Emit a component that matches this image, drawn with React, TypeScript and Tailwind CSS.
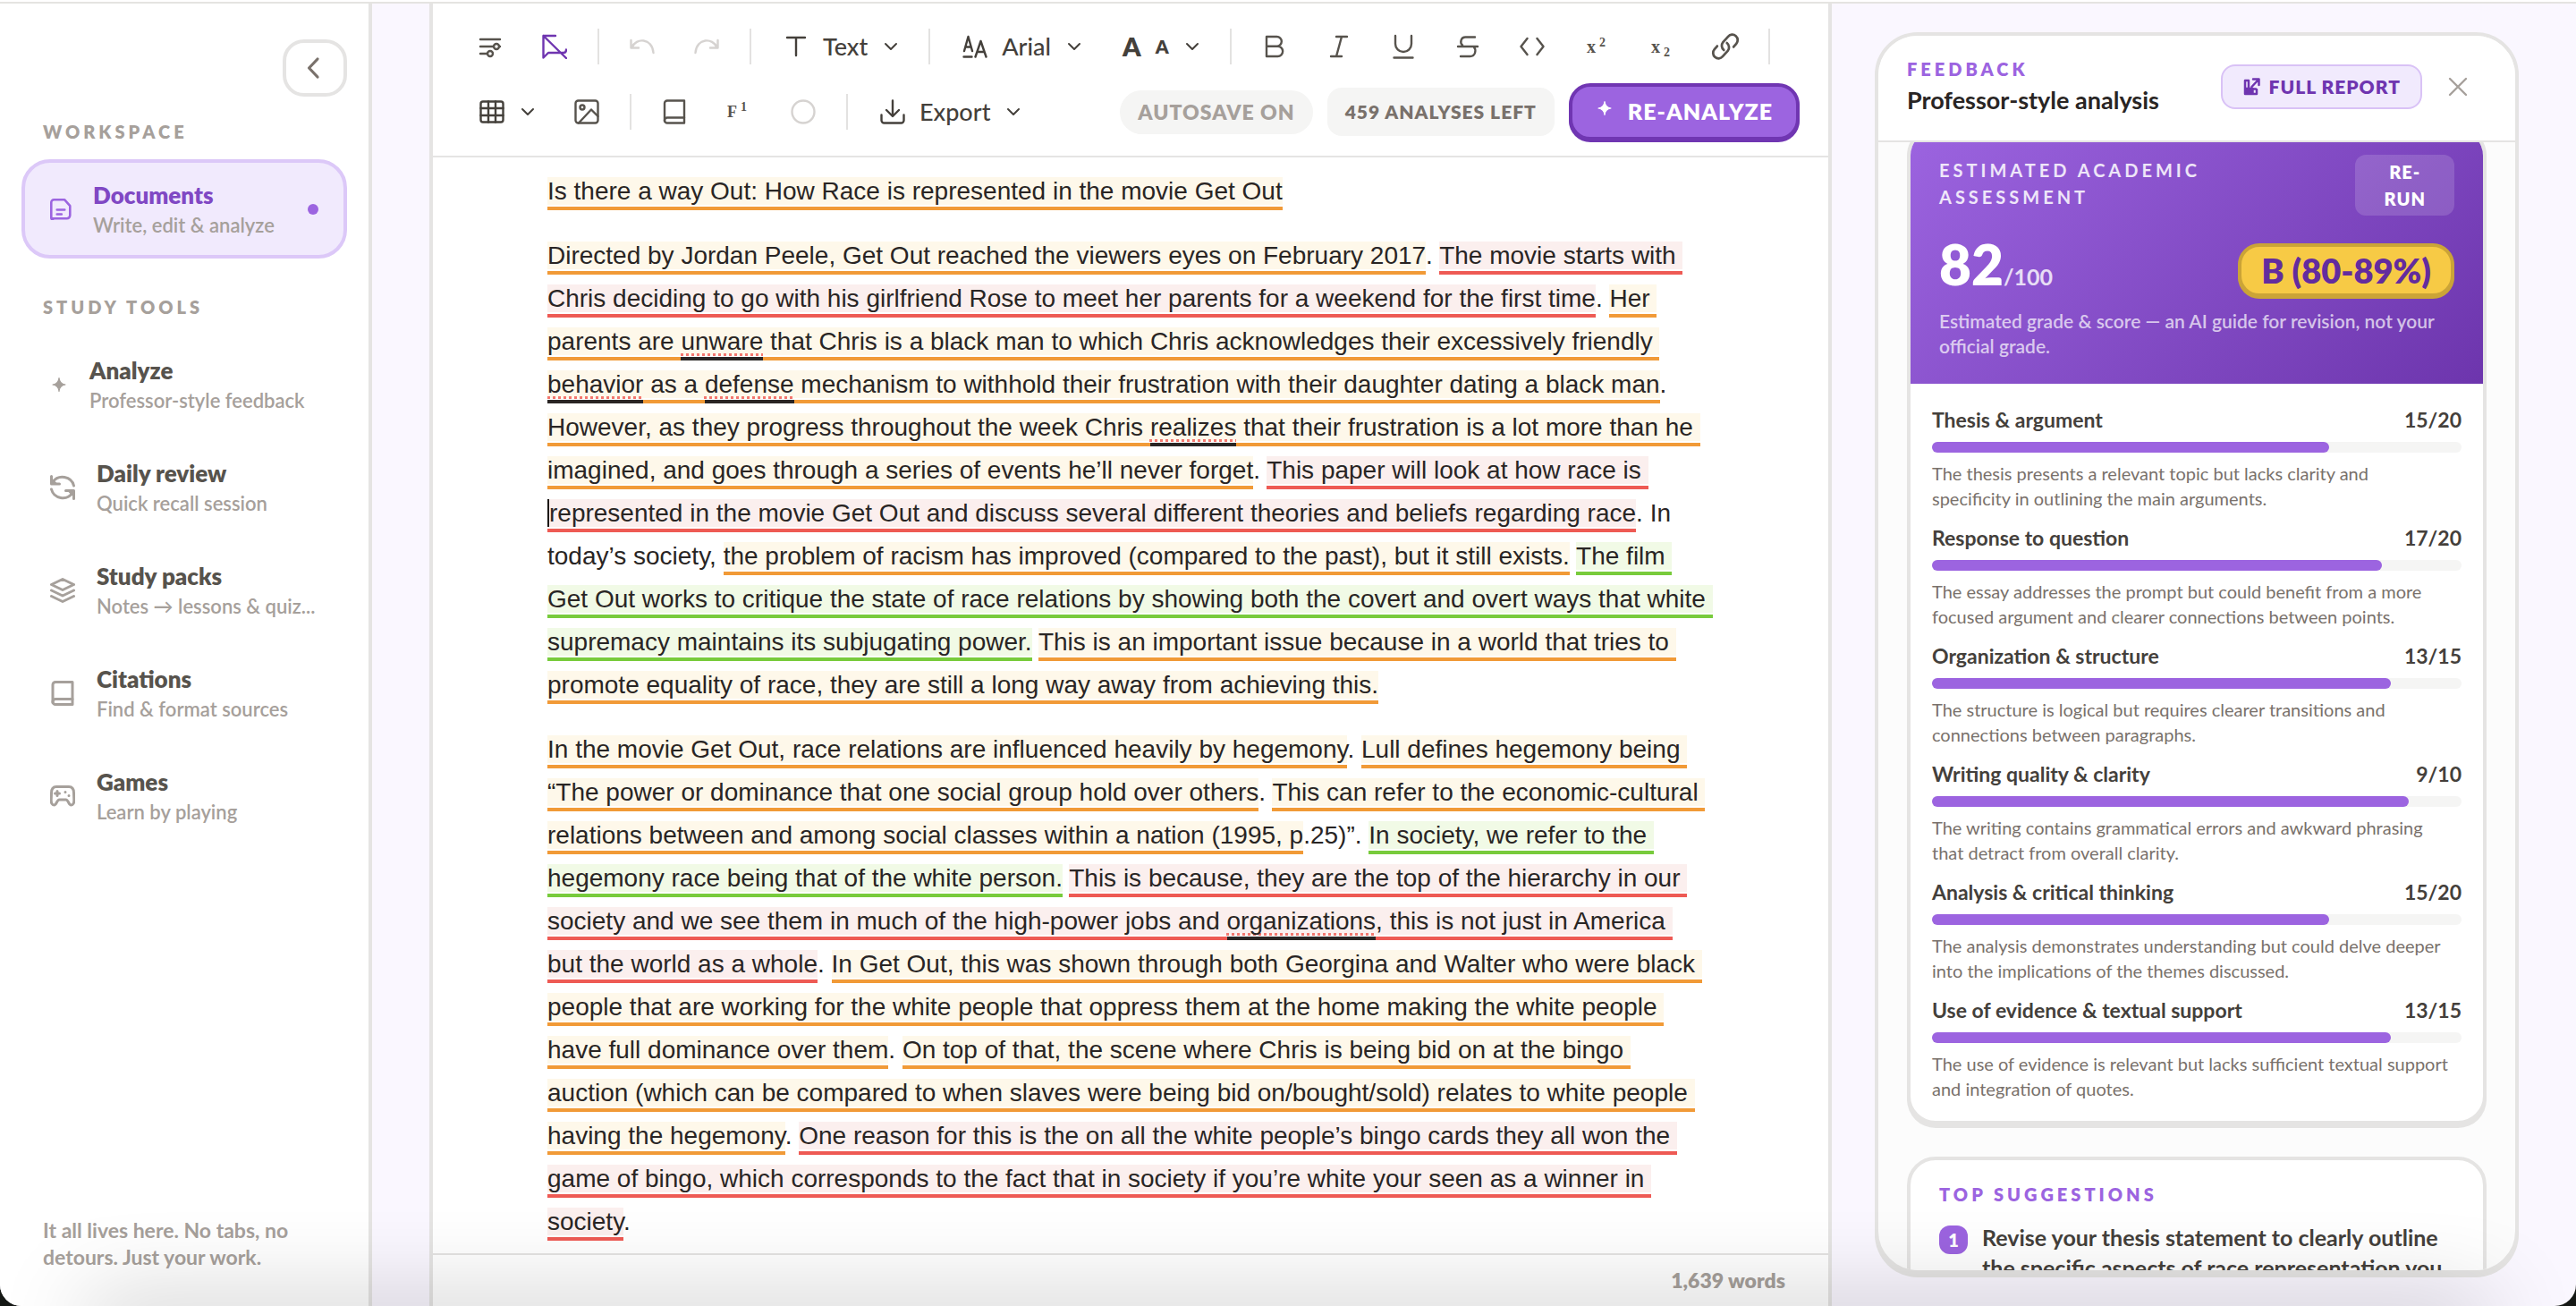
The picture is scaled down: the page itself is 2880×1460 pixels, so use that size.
import React from 'react';
import clsx from 'clsx';

type Tone = 'amber' | 'red' | 'green' | null;
type Segment = [Tone, string];

interface IconProps {
  className?: string;
  children: React.ReactNode;
}

// 28px outline icon, inherits the text colour
const Icon: React.FC<IconProps> = ({ className = 'size-7', children }) => (
  <svg
    viewBox="0 0 28 28"
    className={clsx('shrink-0', className)}
    fill="none"
    stroke="currentColor"
    strokeWidth="2.4"
    strokeLinecap="round"
    strokeLinejoin="round"
    aria-hidden="true"
  >
    {children}
  </svg>
);

const Chevron = () => (
  <svg viewBox="0 0 20 20" className="size-5 shrink-0" fill="none" stroke="currentColor" strokeWidth="2" strokeLinecap="round" strokeLinejoin="round" aria-hidden="true">
    <path d="M4 7l6 6 6-6" />
  </svg>
);

const Sparkle: React.FC<{ className?: string }> = ({ className }) => (
  <svg viewBox="0 0 20 20" className={clsx('size-5 shrink-0', className)} fill="currentColor" aria-hidden="true">
    <path d="M10 2.5Q10.500 9 17 10 10.500 11 10 17.500 9.500 11 3 10 9.500 9 10 2.500z" stroke="currentColor" strokeWidth="1.200" strokeLinejoin="round" />
  </svg>
);

const BookIcon = () => (
  <Icon>
    <path d="M25 20.500V1.500H6a3 3 0 0 0-3 3v20" />
    <path d="M25 20.500H6a3 3 0 0 0 0 6h19z" />
  </Icon>
);

const studyTools = [
  { label: 'Analyze', hint: 'Professor-style feedback', icon: <Sparkle className="text-stone-400" /> },
  {
    label: 'Daily review',
    hint: 'Quick recall session',
    icon: (
      <Icon>
        <path d="M26.500 12A13 12.500 0 0 0 3 8M1.500 1.500v8.500h9M1.500 16a13 12.500 0 0 0 23.500 4M26.500 26.500v-9h-9" />
        <path d="M2 3.500L8.500 10H2zM26 24.500L19.500 18H26z" fill="currentColor" stroke="none" />
      </Icon>
    ),
  },
  {
    label: 'Study packs',
    hint: 'Notes → lessons & quiz...',
    icon: (
      <Icon>
        <path d="M14 1.500L26.500 7.500 14 13.500 1.500 7.500zM1.500 14l12.500 6 12.500-6M1.500 20.500l12.500 6 12.500-6" />
      </Icon>
    ),
  },
  { label: 'Citations', hint: 'Find & format sources', icon: <BookIcon /> },
  {
    label: 'Games',
    hint: 'Learn by playing',
    icon: (
      <Icon>
        <path d="M7 3.500h14c4 0 5.500 2.500 5.500 7l.3 8c.1 3-1 5.500-3.200 5.500-3 0-3-6-6-6h-7.200c-3 0-3 6-6 6-2.200 0-3.300-2.500-3.200-5.500l.3-8C1.500 6 3 3.500 7 3.500z" />
        <path d="M5.500 11h5M8 8.500v5" />
        <path d="M17 9.500h.01M21 13.500h.01" />
      </Icon>
    ),
  },
];

// *word* is a spelling mark, |word has the caret in front of it
const essay: Segment[][] = [
  [['amber', 'Is there a way Out: How Race is represented in the movie Get Out']],
  [
    ['amber', 'Directed by Jordan Peele, Get Out reached the viewers eyes on February 2017'],
    [null, '. '],
    ['red', 'The movie starts with Chris deciding to go with his girlfriend Rose to meet her parents for a weekend for the first time'],
    [null, '. '],
    ['amber', 'Her parents are *unware* that Chris is a black man to which Chris acknowledges their excessively friendly *behavior* as a *defense* mechanism to withhold their frustration with their daughter dating a black man'],
    [null, '. '],
    ['amber', 'However, as they progress throughout the week Chris *realizes* that their frustration is a lot more than he imagined, and goes through a series of events he’ll never forget'],
    [null, '. '],
    ['red', 'This paper will look at how race is |represented in the movie Get Out and discuss several different theories and beliefs regarding race'],
    [null, '. In today’s society, '],
    ['amber', 'the problem of racism has improved (compared to the past), but it still exists.'],
    [null, ' '],
    ['green', 'The film Get Out works to critique the state of race relations by showing both the covert and overt ways that white supremacy maintains its subjugating power.'],
    [null, ' '],
    ['amber', 'This is an important issue because in a world that tries to promote equality of race, they are still a long way away from achieving this.'],
  ],
  [
    ['amber', 'In the movie Get Out, race relations are influenced heavily by hegemony'],
    [null, '. '],
    ['amber', 'Lull defines hegemony being “The power or dominance that one social group hold over others'],
    [null, '. '],
    ['amber', 'This can refer to the economic-cultural relations between and among social classes within a nation (1995, p'],
    [null, '.25)”. '],
    ['green', 'In society, we refer to the hegemony race being that of the white person.'],
    [null, ' '],
    ['red', 'This is because, they are the top of the hierarchy in our society and we see them in much of the high-power jobs and *organizations*, this is not just in America but the world as a whole'],
    [null, '. '],
    ['amber', 'In Get Out, this was shown through both Georgina and Walter who were black people that are working for the white people that oppress them at the home making the white people have full dominance over them'],
    [null, '. '],
    ['amber', 'On top of that, the scene where Chris is being bid on at the bingo auction (which can be compared to when slaves were being bid on/bought/sold) relates to white people having the hegemony'],
    [null, '. '],
    ['red', 'One reason for this is the on all the white people’s bingo cards they all won the game of bingo, which corresponds to the fact that in society if you’re white your seen as a winner in society'],
    [null, '.'],
  ],
];

const criteria = [
  { name: 'Thesis & argument', score: 15, max: 20, note: 'The thesis presents a relevant topic but lacks clarity and\nspecificity in outlining the main arguments.' },
  { name: 'Response to question', score: 17, max: 20, note: 'The essay addresses the prompt but could benefit from a more\nfocused argument and clearer connections between points.' },
  { name: 'Organization & structure', score: 13, max: 15, note: 'The structure is logical but requires clearer transitions and\nconnections between paragraphs.' },
  { name: 'Writing quality & clarity', score: 9, max: 10, note: 'The writing contains grammatical errors and awkward phrasing\nthat detract from overall clarity.' },
  { name: 'Analysis & critical thinking', score: 15, max: 20, note: 'The analysis demonstrates understanding but could delve deeper\ninto the implications of the themes discussed.' },
  { name: 'Use of evidence & textual support', score: 13, max: 15, note: 'The use of evidence is relevant but lacks sufficient textual support\nand integration of quotes.' },
];

const toneClass = {
  amber: 'bg-[#fef8ea] border-[#f19a37]',
  red: 'bg-[#fbefee] border-[#ee5a54]',
  green: 'bg-[#f1fae6] border-[#78cb3c]',
};

const renderText = (text: string) =>
  text.split(/(\*[^*]+\*|\|\w+)/).map((part, i) => {
    if (part.startsWith('|')) {
      return (
        <span key={i} className="border-l-2 border-stone-900">
          {part.slice(1)}
        </span>
      );
    }
    if (part.startsWith('*')) {
      return (
        <span key={i} className="border-b-4 border-stone-800 pb-[2px] underline decoration-[#f3776f] decoration-dotted decoration-3 underline-offset-4 [text-decoration-skip-ink:none]">
          {part.slice(1, -1)}
        </span>
      );
    }
    return part;
  });

const NavItem: React.FC<{ label: string; hint: string; icon: React.ReactNode; active?: boolean }> = ({ label, hint, icon, active }) => (
  <a
    href="#"
    className={clsx(
      'flex items-center gap-6 rounded-[32px] border-4 px-7 py-[18px] [&>svg]:stroke-3',
      active ? 'border-[#dcc8f8] bg-[#f1eafd]' : 'border-transparent',
    )}
  >
    {icon}
    <span className="flex min-w-0 flex-1 flex-col">
      <span className={clsx('text-[26px] leading-[36px] font-extrabold', active ? 'text-[#8048c4]' : 'text-stone-600')}>{label}</span>
      <span className="truncate text-[22px] leading-[31px] font-semibold text-stone-400">{hint}</span>
    </span>
    {active && <span className="size-3 shrink-0 rounded-full bg-[#9c64e0]" />}
  </a>
);

const Sidebar = () => (
  <aside className="flex w-[416px] shrink-0 flex-col border-r-4 border-[#e5e4e3] bg-white pt-10 pr-6 pb-10 pl-6">
    <button aria-label="Collapse sidebar" className="flex h-16 w-[72px] items-center justify-center self-end rounded-[24px] border-4 border-[#e5e4e3] text-stone-500">
      <Icon>
        <path d="M17 4L7.500 14l9.500 10" strokeWidth="3.200" />
      </Icon>
    </button>
    <h2 className="mt-6 mb-4 pl-6 text-[20px] leading-[30px] font-extrabold tracking-[4px] text-stone-400">WORKSPACE</h2>
    <NavItem
      active
      label="Documents"
      hint="Write, edit & analyze"
      icon={
        <Icon className="size-6 text-[#9c64e0]">
          <path d="M3.500 27.500v-1.500H22a4 4 0 0 0 4-4V9.500L19 1.500H5A3.500 3.500 0 0 0 1.500 5v20a2.500 2.500 0 0 0 2 2.500M9 14.500h10M9 20.500h6" />
        </Icon>
      }
    />
    <h2 className="mt-[39px] mb-4 pl-6 text-[20px] leading-[30px] font-extrabold tracking-[4px] text-stone-400">STUDY TOOLS</h2>
    <nav className="flex flex-col gap-1 text-stone-400">
      {studyTools.map((tool) => (
        <NavItem key={tool.label} {...tool} />
      ))}
    </nav>
    <p className="mt-auto pr-4 pl-6 text-[23px] leading-[30px] font-bold text-stone-400">
      It all lives here. No tabs, no
      <br />
      detours. Just your work.
    </p>
  </aside>
);

const ToolButton: React.FC<{ label: string; className?: string; children: React.ReactNode }> = ({ label, className, children }) => (
  <button aria-label={label} className={clsx('flex h-16 w-[72px] items-center justify-center', className)}>
    {children}
  </button>
);

const MenuButton: React.FC<{ label: string; children: React.ReactNode }> = ({ label, children }) => (
  <button aria-label={label} className="flex h-16 items-center gap-4 pr-5 pl-6 text-[27px] font-medium text-stone-700">
    {children}
    <Chevron />
  </button>
);

const Divider = () => <span className="mx-3 h-10 w-[2px] bg-[#e3e2e1]" />;

const Toolbar = () => (
  <div className="flex flex-col gap-[9px] border-b-2 border-[#e5e4e3] px-7 pt-4 pb-[17px] text-stone-600">
    <div className="flex h-16 items-center">
      <ToolButton label="Formatting options">
        <Icon>
          <path d="M3 6h22M3 14h15M24.500 14h.5M3 22h8" />
          <circle cx="21" cy="14" r="3" />
          <circle cx="14" cy="22" r="3" />
        </Icon>
      </ToolButton>
      <ToolButton label="Hide marks" className="text-[#6f35b0]">
        <Icon>
          <path d="M15 2H1.500v24.500L7 21h17c2 0 3-1 3-3.500M1.500 2L27 27" />
        </Icon>
      </ToolButton>
      <Divider />
      <ToolButton label="Undo" className="text-stone-300">
        <Icon>
          <path d="M1.500 7v8.500H10M2.500 15C7 4 25 4 26.500 21" />
        </Icon>
      </ToolButton>
      <ToolButton label="Redo" className="text-stone-300">
        <Icon>
          <path d="M26.500 7v8.500H18M25.500 15C21 4 3 4 1.500 21" />
        </Icon>
      </ToolButton>
      <Divider />
      <MenuButton label="Text style">
        <Icon>
          <path d="M4 4h20M14 4v20" />
        </Icon>
        Text
      </MenuButton>
      <Divider />
      <MenuButton label="Font family">
        <Icon>
          <path d="M2 19L6.500 3 11 19M3.500 14.500h6M1.500 25.500h9M14.500 25.500L20.500 8l6 17.500M16.500 20h8" />
        </Icon>
        Arial
      </MenuButton>
      <MenuButton label="Font size">
        <span className="text-[29px] font-extrabold">A</span>
        <span className="text-[21px] font-extrabold">A</span>
      </MenuButton>
      <Divider />
      <ToolButton label="Bold">
        <Icon>
          <path d="M5 3h11.500a5.300 5.300 0 0 1 0 10.700H5zM5 13.700h12.500a5.600 5.600 0 0 1 0 11.300H5z" />
        </Icon>
      </ToolButton>
      <ToolButton label="Italic">
        <Icon>
          <path d="M11 3h12M5 25h12M17 3l-6 22" />
        </Icon>
      </ToolButton>
      <ToolButton label="Underline">
        <Icon>
          <path d="M5 2v9a9 9 0 0 0 18 0V2M3.500 26.500h21" />
        </Icon>
      </ToolButton>
      <ToolButton label="Strikethrough">
        <Icon>
          <path d="M22 3.500H11.500C6 3.500 5 10 8 12.500M3 14h22M6 25h10.500c6 0 7.500-7 4-11" />
        </Icon>
      </ToolButton>
      <ToolButton label="Code">
        <Icon>
          <path d="M8.500 5L1.500 14l7 9M19.500 5l7 9-7 9" />
        </Icon>
      </ToolButton>
      <ToolButton label="Superscript">
        <span className="font-['Liberation_Serif',serif] text-[20px] font-bold">
          x<sup className="pl-1 text-[14px]">2</sup>
        </span>
      </ToolButton>
      <ToolButton label="Subscript">
        <span className="font-['Liberation_Serif',serif] text-[20px] font-bold">
          x<sub className="pl-1 text-[14px]">2</sub>
        </span>
      </ToolButton>
      <ToolButton label="Link">
        <Icon className="size-8">
          <path d="M12.500 17.500a5.500 5.500 0 0 1-.8-7.800l5-5.500a5.300 5.300 0 0 1 8 7l-2.700 3.200" />
          <path d="M15.500 10.500a5.500 5.500 0 0 1 .8 7.800l-5 5.500a5.300 5.300 0 0 1-8-7l2.700-3.200" />
        </Icon>
      </ToolButton>
      <Divider />
    </div>
    <div className="flex h-16 items-center">
      <MenuButton label="Table">
        <Icon>
          <rect x="1.500" y="2.500" width="25" height="23" rx="2.500" />
          <path d="M1.500 10h25M1.500 18h25M10 2.500v23M18 2.500v23" />
        </Icon>
      </MenuButton>
      <ToolButton label="Image">
        <Icon>
          <rect x="1.500" y="1.500" width="25" height="25" rx="3" />
          <circle cx="9" cy="9" r="2.500" />
          <path d="M5 26.500L19 11.500l7.500 7.500" />
        </Icon>
      </ToolButton>
      <Divider />
      <ToolButton label="Citations">
        <BookIcon />
      </ToolButton>
      <ToolButton label="Footnote">
        <span className="pr-1 font-['Liberation_Serif',serif] text-[18px] font-bold">
          F<sup className="pl-1 text-[14px]">1</sup>
        </span>
      </ToolButton>
      <ToolButton label="Status" className="text-stone-300">
        <Icon>
          <circle cx="14" cy="14" r="12.500" />
        </Icon>
      </ToolButton>
      <Divider />
      <MenuButton label="Export">
        <Icon>
          <path d="M14 1.500v17M7 12l7 7 7-7M1.500 17.500v6a3 3 0 0 0 3 3h19a3 3 0 0 0 3-3v-6" />
        </Icon>
        Export
      </MenuButton>
      <span className="ml-auto rounded-full bg-[#f5f5f4] px-5 py-2 text-[23px] leading-[33px] font-extrabold tracking-[1px] text-stone-400">AUTOSAVE ON</span>
      <span className="ml-4 rounded-2xl bg-[#f5f5f4] px-5 py-3 text-[21px] leading-[30px] font-extrabold tracking-[1px] text-stone-500">459 ANALYSES LEFT</span>
      <button className="ml-4 flex h-16 items-center gap-4 rounded-[24px] border-4 border-[#7036b2] bg-[#9c64e0] px-[26px] text-[25px] font-extrabold tracking-[1px] text-white shadow-[0_2px_0_#7036b2]">
        <Sparkle className="mb-2" />
        RE-ANALYZE
      </button>
      <span className="w-1" />
    </div>
  </div>
);

const Editor = () => (
  <main className="flex min-w-0 flex-1 flex-col border-x-4 border-[#e5e4e3] bg-white">
    <Toolbar />
    <article className="flex min-h-0 flex-1 flex-col gap-6 overflow-hidden px-32 pt-[14px] font-['Liberation_Sans',Arial,sans-serif] text-[28px] leading-[48px] whitespace-break-spaces text-stone-800">
      {essay.map((segments, i) => (
        <p key={i}>
          {segments.map(([tone, text], j) => (
            <span key={j} className={tone ? clsx('border-b-4 bg-clip-content pb-[2px]', toneClass[tone]) : undefined}>
              {renderText(text)}
            </span>
          ))}
        </p>
      ))}
    </article>
    <footer className="flex h-[59px] shrink-0 items-center justify-end border-t-2 border-[#e5e4e3] px-12 text-[23px] font-extrabold text-stone-400">1,639 words</footer>
  </main>
);

const FeedbackPanel = () => (
  <section className="mt-8 mr-16 mb-9 ml-12 flex w-[720px] shrink-0 flex-col overflow-hidden rounded-[48px] border-4 border-[#e5e4e3] bg-[#fcfcfc] shadow-[0_4px_0_#e5e4e3]">
    <header className="flex h-[119px] shrink-0 items-center border-b-2 border-[#e5e4e3] bg-white pr-[50px] pb-1 pl-8">
      <div className="flex-1">
        <p className="text-[20px] leading-[30px] font-extrabold tracking-[4px] text-[#9c64e0]">FEEDBACK</p>
        <h1 className="text-[27px] leading-[40px] font-bold text-stone-800">Professor-style analysis</h1>
      </div>
      <button className="flex h-[50px] items-center gap-[10px] rounded-2xl border-2 border-[#d9c2f6] bg-[#f1eafd] px-[22px] text-[21px] font-extrabold tracking-[1px] text-[#6f35b0]">
        <svg viewBox="0 0 20 20" className="size-5" fill="none" stroke="currentColor" strokeWidth="2.500" strokeLinecap="round" strokeLinejoin="round" aria-hidden="true">
          <path d="M7 3H3v15h13v-5M7 3.500v9h8" />
          <path d="M3.500 12h8v5.500h-8z" fill="currentColor" />
          <path d="M10.500 10L18 2M12 1.500h6.500V8" />
        </svg>
        FULL REPORT
      </button>
      <button aria-label="Close" className="ml-[26px] flex size-7 items-center justify-center text-stone-400">
        <Icon>
          <path d="M5 5l18 18M23 5L5 23" />
        </Icon>
      </button>
    </header>
    <div className="flex min-h-0 flex-1 flex-col gap-9 overflow-hidden px-8">
      {/* scrolled a little, so the card's top edge sits under the header */}
      <div className="-mt-[17px] shrink-0 overflow-hidden rounded-[32px] border-4 border-[#e5e4e3] bg-white shadow-[0_4px_0_#e5e4e3]">
        <div className="bg-linear-135 from-[#9c64e0] to-[#6d35ad] px-8 pt-[27px] pb-7">
          <div className="flex items-start justify-between">
            <h2 className="pt-[2px] text-[20px] leading-[30px] font-bold tracking-[4px] text-white/85">
              ESTIMATED ACADEMIC
              <br />
              ASSESSMENT
            </h2>
            <button className="rounded-xl bg-white/15 px-8 py-1 text-[20px] leading-[30px] font-extrabold tracking-[1px] text-white">
              RE-
              <br />
              RUN
            </button>
          </div>
          <div className="mt-[30px] flex h-[62px] items-center justify-between">
            <p className="text-[62px] leading-[62px] font-extrabold text-white">
              82<span className="text-[25px] font-bold text-white/80">/100</span>
            </p>
            <span className="rounded-[24px] border-4 border-[#cba437] bg-[#f7ca45] px-[22px] text-[38px] leading-[52px] font-extrabold text-[#632c9e] shadow-[0_2px_0_#cba437]">B (80-89%)</span>
          </div>
          <p className="mt-3 text-[21px] leading-[28px] font-semibold text-white/70">
            Estimated grade &amp; score — an AI guide for revision, not your
            <br />
            official grade.
          </p>
        </div>
        <ul className="flex flex-col gap-[14px] px-6 pt-6 pb-[22px]">
          {criteria.map(({ name, score, max, note }) => (
            <li key={name}>
              <div className="flex justify-between text-[23px] leading-[32px] font-bold text-stone-700">
                <span>{name}</span>
                <span>
                  {score}/{max}
                </span>
              </div>
              <div className="mt-[9px] h-3 rounded-full bg-[#f5f5f4]">
                <div className="h-full rounded-full bg-[#9c64e0]" style={{ width: `${(score / max) * 100}%` }} />
              </div>
              <p className="mt-[9px] text-[20px] leading-[28px] whitespace-pre-line text-stone-500">{note}</p>
            </li>
          ))}
        </ul>
      </div>
      <div className="shrink-0 rounded-[32px] border-4 border-[#e5e4e3] bg-white px-8 pt-[23px] pb-8">
        <h2 className="text-[20px] leading-[30px] font-extrabold tracking-[4px] text-[#9c64e0]">TOP SUGGESTIONS</h2>
        <div className="mt-4 flex gap-4">
          <span className="mt-1 flex size-8 shrink-0 items-center justify-center rounded-xl bg-[#9c64e0] text-[20px] font-extrabold text-white">1</span>
          <p className="text-[25px] leading-[34px] font-bold text-stone-700">
            Revise your thesis statement to clearly outline
            <br />
            the specific aspects of race representation you
          </p>
        </div>
      </div>
    </div>
  </section>
);

const App: React.FC = () => {
  return (
    <div className="h-screen bg-[#151815] font-['Lato',sans-serif]">
      <div className="relative flex h-full flex-col overflow-hidden rounded-b-[24px] bg-[#faf7ff]">
        <div className="h-1 shrink-0 border-b-2 border-[#e5e4e1] bg-white" />
        <div className="flex min-h-0 flex-1">
          <Sidebar />
          <div className="flex min-w-0 flex-1 pl-16">
            <Editor />
            <FeedbackPanel />
          </div>
        </div>
        {/* soft shade rising from the window's lower edge */}
        <div className="pointer-events-none absolute inset-x-24 -bottom-10 h-10 shadow-[0_0_100px_rgba(0,0,0,0.3)]" />
      </div>
    </div>
  );
};

export default App;
